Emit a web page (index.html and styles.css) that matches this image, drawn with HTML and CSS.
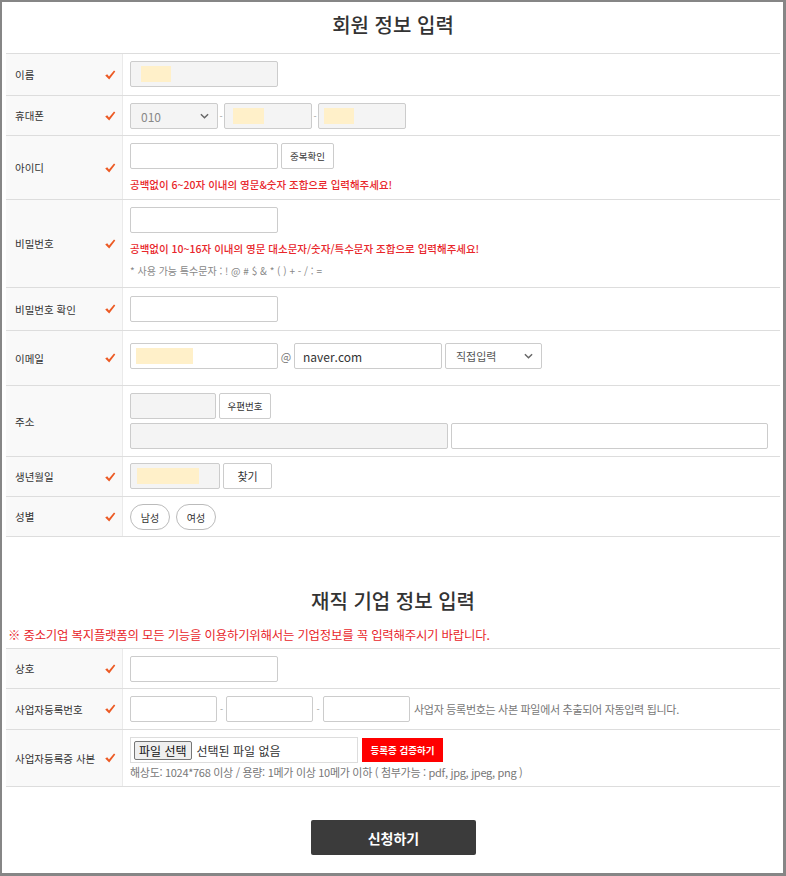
FILE: index.html
```html
<!DOCTYPE html>
<html lang="ko">
<head>
    <meta charset="UTF-8">
    <meta name="viewport" content="width=device-width, initial-scale=1.0">
    <title>회원 정보 입력</title>
    <link rel="stylesheet" href="styles.css">
</head>
<body>
<div class="frame">
    <h2 class="title">회원 정보 입력</h2>
    <div class="form">
        <div class="row">
            <div class="label"><span>이름</span><svg class="chk" viewBox="0 0 12 12"><path d="M1.2 6.6 L3.2 5.2 L5 7.6 L10 1.4 L11.3 2.6 L5.2 10.6 Z"/></svg></div>
            <div class="field pb8">
                <div class="inp ro w148"><i class="mask m1"></i></div>
            </div>
        </div>
        <div class="row">
            <div class="label"><span>휴대폰</span><svg class="chk" viewBox="0 0 12 12"><path d="M1.2 6.6 L3.2 5.2 L5 7.6 L10 1.4 L11.3 2.6 L5.2 10.6 Z"/></svg></div>
            <div class="field line pb6">
                <div class="sel ro w88"><span class="muted">010</span><svg class="chev" viewBox="0 0 10 6"><path d="M1 1 L5 5 L9 1"/></svg></div>
                <span class="dash">-</span>
                <div class="inp ro w88"><i class="mask m2"></i></div>
                <span class="dash">-</span>
                <div class="inp ro w88"><i class="mask m3"></i></div>
            </div>
        </div>
        <div class="row">
            <div class="label"><span>아이디</span><svg class="chk" viewBox="0 0 12 12"><path d="M1.2 6.6 L3.2 5.2 L5 7.6 L10 1.4 L11.3 2.6 L5.2 10.6 Z"/></svg></div>
            <div class="field">
                <div class="line">
                    <input class="inp w148" type="text">
                    <button class="btn w53">중복확인</button>
                </div>
                <p class="warn">공백없이 6~20자 이내의 영문&amp;숫자 조합으로 입력해주세요!</p>
            </div>
        </div>
        <div class="row">
            <div class="label"><span>비밀번호</span><svg class="chk" viewBox="0 0 12 12"><path d="M1.2 6.6 L3.2 5.2 L5 7.6 L10 1.4 L11.3 2.6 L5.2 10.6 Z"/></svg></div>
            <div class="field pb9">
                <input class="inp w148" type="password">
                <p class="warn">공백없이 10~16자 이내의 영문 대소문자/숫자/특수문자 조합으로 입력해주세요!</p>
                <p class="hint">* 사용 가능 특수문자 : ! @ # $ &amp; * ( ) + - / : =</p>
            </div>
        </div>
        <div class="row">
            <div class="label"><span>비밀번호 확인</span><svg class="chk" viewBox="0 0 12 12"><path d="M1.2 6.6 L3.2 5.2 L5 7.6 L10 1.4 L11.3 2.6 L5.2 10.6 Z"/></svg></div>
            <div class="field pt8 pb8">
                <input class="inp w148" type="password">
            </div>
        </div>
        <div class="row">
            <div class="label"><span>이메일</span><svg class="chk" viewBox="0 0 12 12"><path d="M1.2 6.6 L3.2 5.2 L5 7.6 L10 1.4 L11.3 2.6 L5.2 10.6 Z"/></svg></div>
            <div class="field line email">
                <div class="inp w148"><i class="mask m4"></i></div>
                <span class="at">@</span>
                <div class="inp w148 txt">naver.com</div>
                <div class="sel w97"><span>직접입력</span><svg class="chev" viewBox="0 0 10 6"><path d="M1 1 L5 5 L9 1"/></svg></div>
            </div>
        </div>
        <div class="row">
            <div class="label"><span>주소</span></div>
            <div class="field">
                <div class="line">
                    <div class="inp ro w86"></div>
                    <button class="btn w52">우편번호</button>
                </div>
                <div class="line addr">
                    <div class="inp ro w318"></div>
                    <div class="inp w317"></div>
                </div>
            </div>
        </div>
        <div class="row">
            <div class="label"><span>생년월일</span><svg class="chk" viewBox="0 0 12 12"><path d="M1.2 6.6 L3.2 5.2 L5 7.6 L10 1.4 L11.3 2.6 L5.2 10.6 Z"/></svg></div>
            <div class="field line pt6">
                <div class="inp ro w90"><i class="mask m5"></i></div>
                <button class="btn w49 big">찾기</button>
            </div>
        </div>
        <div class="row">
            <div class="label"><span>성별</span><svg class="chk" viewBox="0 0 12 12"><path d="M1.2 6.6 L3.2 5.2 L5 7.6 L10 1.4 L11.3 2.6 L5.2 10.6 Z"/></svg></div>
            <div class="field line pills pb6">
                <button class="pill">남성</button>
                <button class="pill">여성</button>
            </div>
        </div>
    </div>

    <h2 class="title title2">재직 기업 정보 입력</h2>
    <p class="notice">※ 중소기업 복지플랫폼의 모든 기능을 이용하기위해서는 기업정보를 꼭 입력해주시기 바랍니다.</p>
    <div class="form">
        <div class="row">
            <div class="label"><span>상호</span><svg class="chk" viewBox="0 0 12 12"><path d="M1.2 6.6 L3.2 5.2 L5 7.6 L10 1.4 L11.3 2.6 L5.2 10.6 Z"/></svg></div>
            <div class="field pb6">
                <input class="inp w148" type="text">
            </div>
        </div>
        <div class="row">
            <div class="label"><span>사업자등록번호</span><svg class="chk" viewBox="0 0 12 12"><path d="M1.2 6.6 L3.2 5.2 L5 7.6 L10 1.4 L11.3 2.6 L5.2 10.6 Z"/></svg></div>
            <div class="field line biz">
                <input class="inp w87" type="text">
                <span class="dash">-</span>
                <input class="inp w87" type="text">
                <span class="dash">-</span>
                <input class="inp w87" type="text">
                <span class="note">사업자 등록번호는 사본 파일에서 추출되어 자동입력 됩니다.</span>
            </div>
        </div>
        <div class="row">
            <div class="label"><span>사업자등록증 사본</span><svg class="chk" viewBox="0 0 12 12"><path d="M1.2 6.6 L3.2 5.2 L5 7.6 L10 1.4 L11.3 2.6 L5.2 10.6 Z"/></svg></div>
            <div class="field">
                <div class="line">
                    <div class="file">
                        <span class="file-btn">파일 선택</span>
                        <span>선택된 파일 없음</span>
                    </div>
                    <button class="verify">등록증 검증하기</button>
                </div>
                <p class="spec">해상도: 1024*768 이상 / 용량: 1메가 이상 10메가 이하 ( 첨부가능 : pdf, jpg, jpeg, png )</p>
            </div>
        </div>
    </div>

    <div class="submit-wrap">
        <button class="submit">신청하기</button>
    </div>
</div>
</body>
</html>
```

FILE: styles.css
```css
* {
    box-sizing: border-box;
}
body {
    margin: 0;
    font-family: "Noto Sans CJK KR", "Noto Sans", sans-serif;
    color: #333;
    background: #fff;
}
.frame {
    height: 876px;
    border: 2px solid #868686;
    border-right-width: 3px;
    border-bottom-width: 3px;
    padding: 0 3px 0 4px;
    overflow: hidden;
}
.title {
    margin: 0;
    height: 51px;
    padding-top: 8px;
    text-align: center;
    font-size: 20px;
    font-weight: 500;
    line-height: 30px;
    color: #333;
}
.title2 {
    height: auto;
    padding-top: 49px;
    margin-bottom: 11px;
}
.form {
    border-top: 1px solid #ddd;
}
.row {
    display: flex;
    border-bottom: 1px solid #ddd;
}
.label {
    width: 117px;
    flex: none;
    display: flex;
    align-items: center;
    justify-content: space-between;
    padding: 0 6px 0 9px;
    background: #f9f9f9;
    border-right: 1px solid #eaeaea;
    font-size: 10.5px;
    color: #333;
}
.chk {
    width: 12px;
    height: 12px;
    fill: #ec5a24;
}
.field {
    flex: 1;
    padding: 7px 7px 7px 7px;
}
.field.pt6 { padding-top: 6px; }
.field.pt8 { padding-top: 8px; }
.field.pb6 { padding-bottom: 6px; }
.field.pb8 { padding-bottom: 8px; }
.field.pb9 { padding-bottom: 9px; }
.line {
    display: flex;
    align-items: center;
}
.inp {
    display: block;
    position: relative;
    height: 26px;
    border: 1px solid #ccc;
    border-radius: 2px;
    background: #fff;
    font-family: inherit;
    font-size: 12px;
    padding: 0 8px;
    margin: 0;
    outline: none;
}
.inp.ro {
    background: #f4f4f4;
}
.txt {
    display: flex;
    align-items: center;
    color: #333;
    font-size: 12px;
}
.mask {
    position: absolute;
    top: 4px;
    height: 16px;
    background: #fff0c9;
}
.m1 { left: 10px; width: 30px; }
.m2 { left: 8px; width: 31px; }
.m3 { left: 5px; width: 30px; }
.m4 { left: 5px; width: 57px; }
.m5 { left: 6px; width: 62px; }
.w49 { width: 49px; }
.w52 { width: 52px; }
.w53 { width: 53px; }
.w86 { width: 86px; }
.w87 { width: 87px; }
.w88 { width: 88px; }
.w90 { width: 90px; }
.w97 { width: 97px; }
.w148 { width: 148px; }
.w317 { width: 317px; }
.w318 { width: 318px; }
.sel {
    height: 26px;
    display: flex;
    align-items: center;
    justify-content: space-between;
    border: 1px solid #ccc;
    border-radius: 2px;
    padding: 0 8px 0 10px;
    background: #fff;
    font-size: 11px;
    color: #555;
}
.sel.ro {
    background: #f4f4f4;
}
.muted {
    color: #888;
    font-size: 12px;
}
.chev {
    width: 9px;
    height: 6px;
    fill: none;
    stroke: #666;
    stroke-width: 1.6;
}
.dash {
    width: 6px;
    text-align: center;
    font-size: 9px;
    color: #999;
}
.biz .dash {
    width: 9px;
}
.biz .inp + .dash + .inp + .dash {
    width: 10px;
}
.at {
    width: 16px;
    text-align: center;
    font-size: 11px;
    color: #777;
}
.email .sel {
    margin-left: 3px;
}
.btn {
    height: 26px;
    margin-left: 3px;
    border: 1px solid #ccc;
    border-radius: 2px;
    background: #fff;
    font-family: inherit;
    font-size: 9.5px;
    color: #333;
    padding: 0;
}
.btn.big {
    font-size: 11px;
}
.addr {
    margin-top: 4px;
    gap: 3px;
}
.warn {
    margin: 9px 0 0;
    font-size: 10.5px;
    font-weight: 500;
    color: #e8262b;
    line-height: 14px;
}
.hint {
    margin: 8px 0 0;
    font-size: 10px;
    color: #888;
    line-height: 14px;
}
.email {
    padding-top: 12px;
    padding-bottom: 16px;
}
.pills {
    gap: 6px;
}
.pill {
    width: 40px;
    height: 26px;
    border: 1px solid #bbb;
    border-radius: 13px;
    background: #fff;
    font-family: inherit;
    font-size: 10px;
    color: #333;
    padding: 0;
}
.notice {
    margin: 0 0 5px 2px;
    font-size: 12.4px;
    color: #e8262b;
    line-height: 16px;
    letter-spacing: -0.2px;
}
.note {
    margin-left: 4px;
    font-size: 11px;
    color: #777;
    letter-spacing: -0.3px;
}
.file {
    width: 228px;
    height: 26px;
    display: flex;
    align-items: center;
    gap: 5px;
    padding: 0 3px;
    border: 1px solid #ddd;
    font-size: 12px;
    color: #333;
}
.file-btn {
    height: 19px;
    line-height: 17px;
    padding: 0 4px;
    border: 1px solid #767676;
    border-radius: 2px;
    background: #efefef;
    font-size: 12px;
    color: #111;
}
.verify {
    height: 24px;
    width: 81px;
    margin-left: 4px;
    border: none;
    background: #ff0000;
    color: #fff;
    font-family: inherit;
    font-size: 9.5px;
    font-weight: 700;
    padding: 0;
}
.spec {
    margin: 2px 0 0;
    font-size: 11px;
    color: #777;
    line-height: 14px;
    letter-spacing: -0.3px;
}
.submit-wrap {
    display: flex;
    justify-content: center;
    padding-top: 33px;
    padding-left: 1px;
}
.submit {
    width: 165px;
    height: 35px;
    border: none;
    border-radius: 2px;
    background: #3b3b3b;
    color: #fff;
    font-family: inherit;
    font-size: 14px;
    font-weight: 700;
}
```
